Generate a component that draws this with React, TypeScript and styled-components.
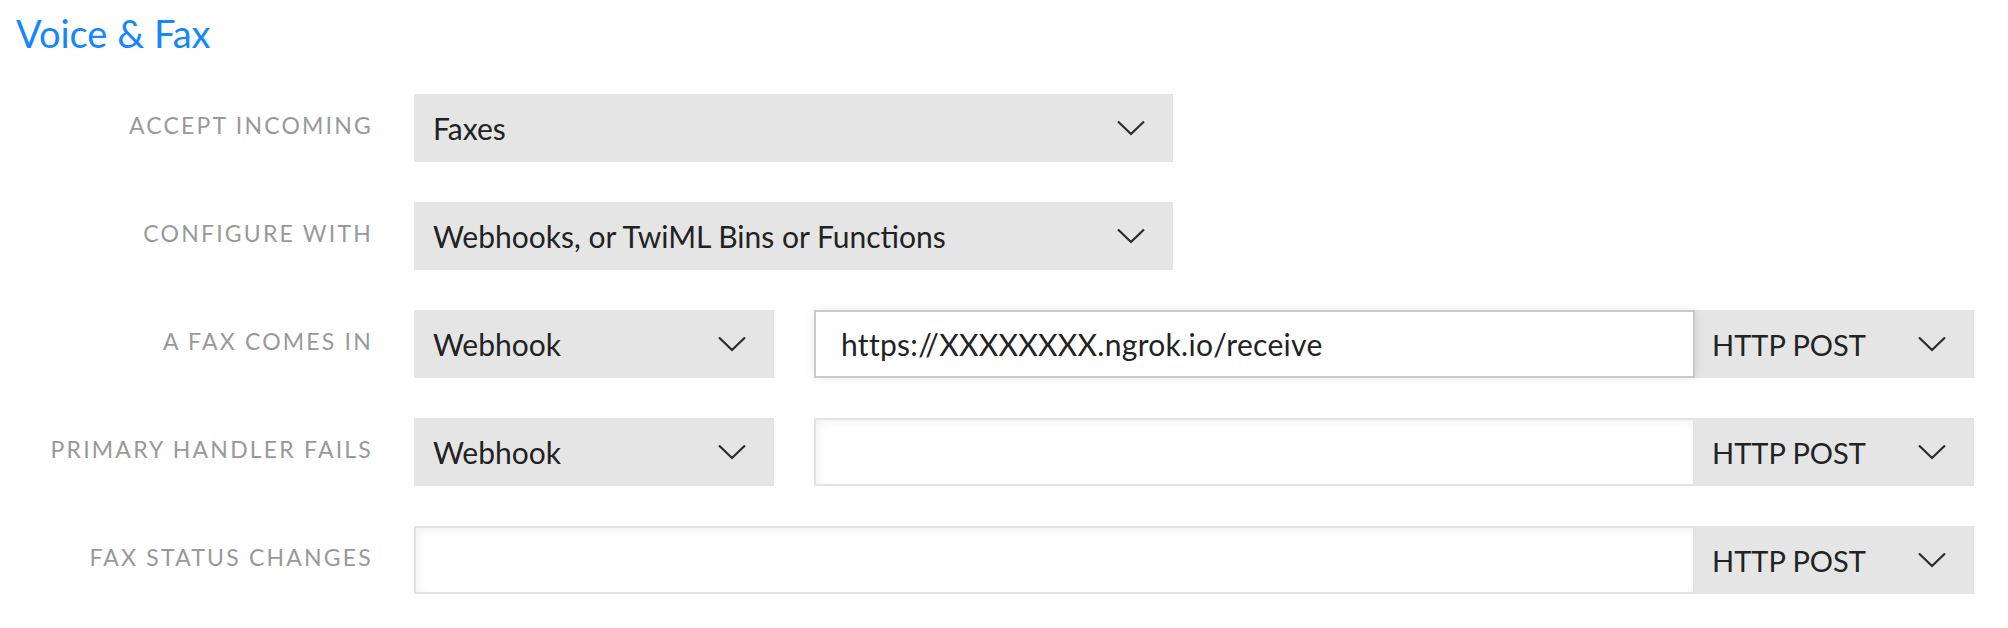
import React from "react";
import styled, { createGlobalStyle } from "styled-components";

const Global = createGlobalStyle`
  html, body { margin: 0; padding: 0; background: #ffffff; }
  body { font-family: Lato, "Open Sans", sans-serif; }
`;

const Page = styled.div`
  padding: 10px 0 0 16px;
  width: 1974px;
  box-sizing: border-box;
`;

const Title = styled.h2`
  margin: 0 0 38px 0;
  font-family: Lato, sans-serif;
  font-weight: 400;
  font-size: 38px;
  line-height: 46px;
  color: #1487ff;
`;

const Form = styled.div`
  display: flex;
  flex-direction: column;
  gap: 40px;
  margin-left: -16px;
`;

const Row = styled.div`
  display: flex;
  align-items: center;
  height: 68px;
`;

const Label = styled.div`
  width: 373px;
  margin-right: 41px;
  text-align: right;
  font-size: 23px;
  letter-spacing: 2.2px;
  text-transform: uppercase;
  color: #999999;
  padding-bottom: 7px;
  flex-shrink: 0;
`;

const Controls = styled.div`
  display: flex;
  align-items: stretch;
  height: 68px;
`;

const Select = styled.div<{ $w: number; $pad?: number; $size?: number }>`
  width: ${(p) => p.$w}px;
  height: 68px;
  box-sizing: border-box;
  background: #e5e5e5;
  display: flex;
  align-items: center;
  justify-content: space-between;
  padding: 0 28px 0 ${(p) => p.$pad ?? 19}px;
  font-size: ${(p) => p.$size ?? 30}px;
  color: #222222;
  flex-shrink: 0;
`;

const Input = styled.div<{ $w: number; $focus?: boolean; $ml?: number }>`
  width: ${(p) => p.$w}px;
  margin-left: ${(p) => p.$ml ?? 0}px;
  height: 68px;
  box-sizing: border-box;
  background: #ffffff;
  border: 2px solid ${(p) => (p.$focus ? "#cacaca" : "#e3e3e3")};
  box-shadow: ${(p) =>
    p.$focus
      ? "0 0 10px rgba(0,0,0,0.10)"
      : "inset 3px 3px 8px rgba(0,0,0,0.05)"};
  display: flex;
  align-items: center;
  padding-left: 25px;
  font-size: 30px;
  letter-spacing: 0.3px;
  color: #222222;
  flex-shrink: 0;
  position: relative;
  z-index: 1;
`;

const Chevron = () => (
  <svg width="28" height="16" viewBox="0 0 28 16" fill="none">
    <polyline points="1,1.5 14,14 27,1.5" stroke="#2b2b2b" strokeWidth="2.2" />
  </svg>
);

export default function App() {
  return (
    <>
      <Global />
      <Page>
        <Title>Voice &amp; Fax</Title>
        <Form>
          <Row>
            <Label>Accept Incoming</Label>
            <Controls>
              <Select $w={759}>
                <span>Faxes</span>
                <Chevron />
              </Select>
            </Controls>
          </Row>
          <Row>
            <Label>Configure With</Label>
            <Controls>
              <Select $w={759}>
                <span>Webhooks, or TwiML Bins or Functions</span>
                <Chevron />
              </Select>
            </Controls>
          </Row>
          <Row>
            <Label>A Fax Comes In</Label>
            <Controls>
              <Select $w={360}>
                <span>Webhook</span>
                <Chevron />
              </Select>
              <Input $w={881} $ml={40} $focus>
                https://XXXXXXXX.ngrok.io/receive
              </Input>
              <Select $w={279} $pad={17} $size={29}>
                <span>HTTP POST</span>
                <Chevron />
              </Select>
            </Controls>
          </Row>
          <Row>
            <Label>Primary Handler Fails</Label>
            <Controls>
              <Select $w={360}>
                <span>Webhook</span>
                <Chevron />
              </Select>
              <Input $w={881} $ml={40} />
              <Select $w={279} $pad={17} $size={29}>
                <span>HTTP POST</span>
                <Chevron />
              </Select>
            </Controls>
          </Row>
          <Row>
            <Label>Fax Status Changes</Label>
            <Controls>
              <Input $w={1281} />
              <Select $w={279} $pad={17} $size={29}>
                <span>HTTP POST</span>
                <Chevron />
              </Select>
            </Controls>
          </Row>
        </Form>
      </Page>
    </>
  );
}
